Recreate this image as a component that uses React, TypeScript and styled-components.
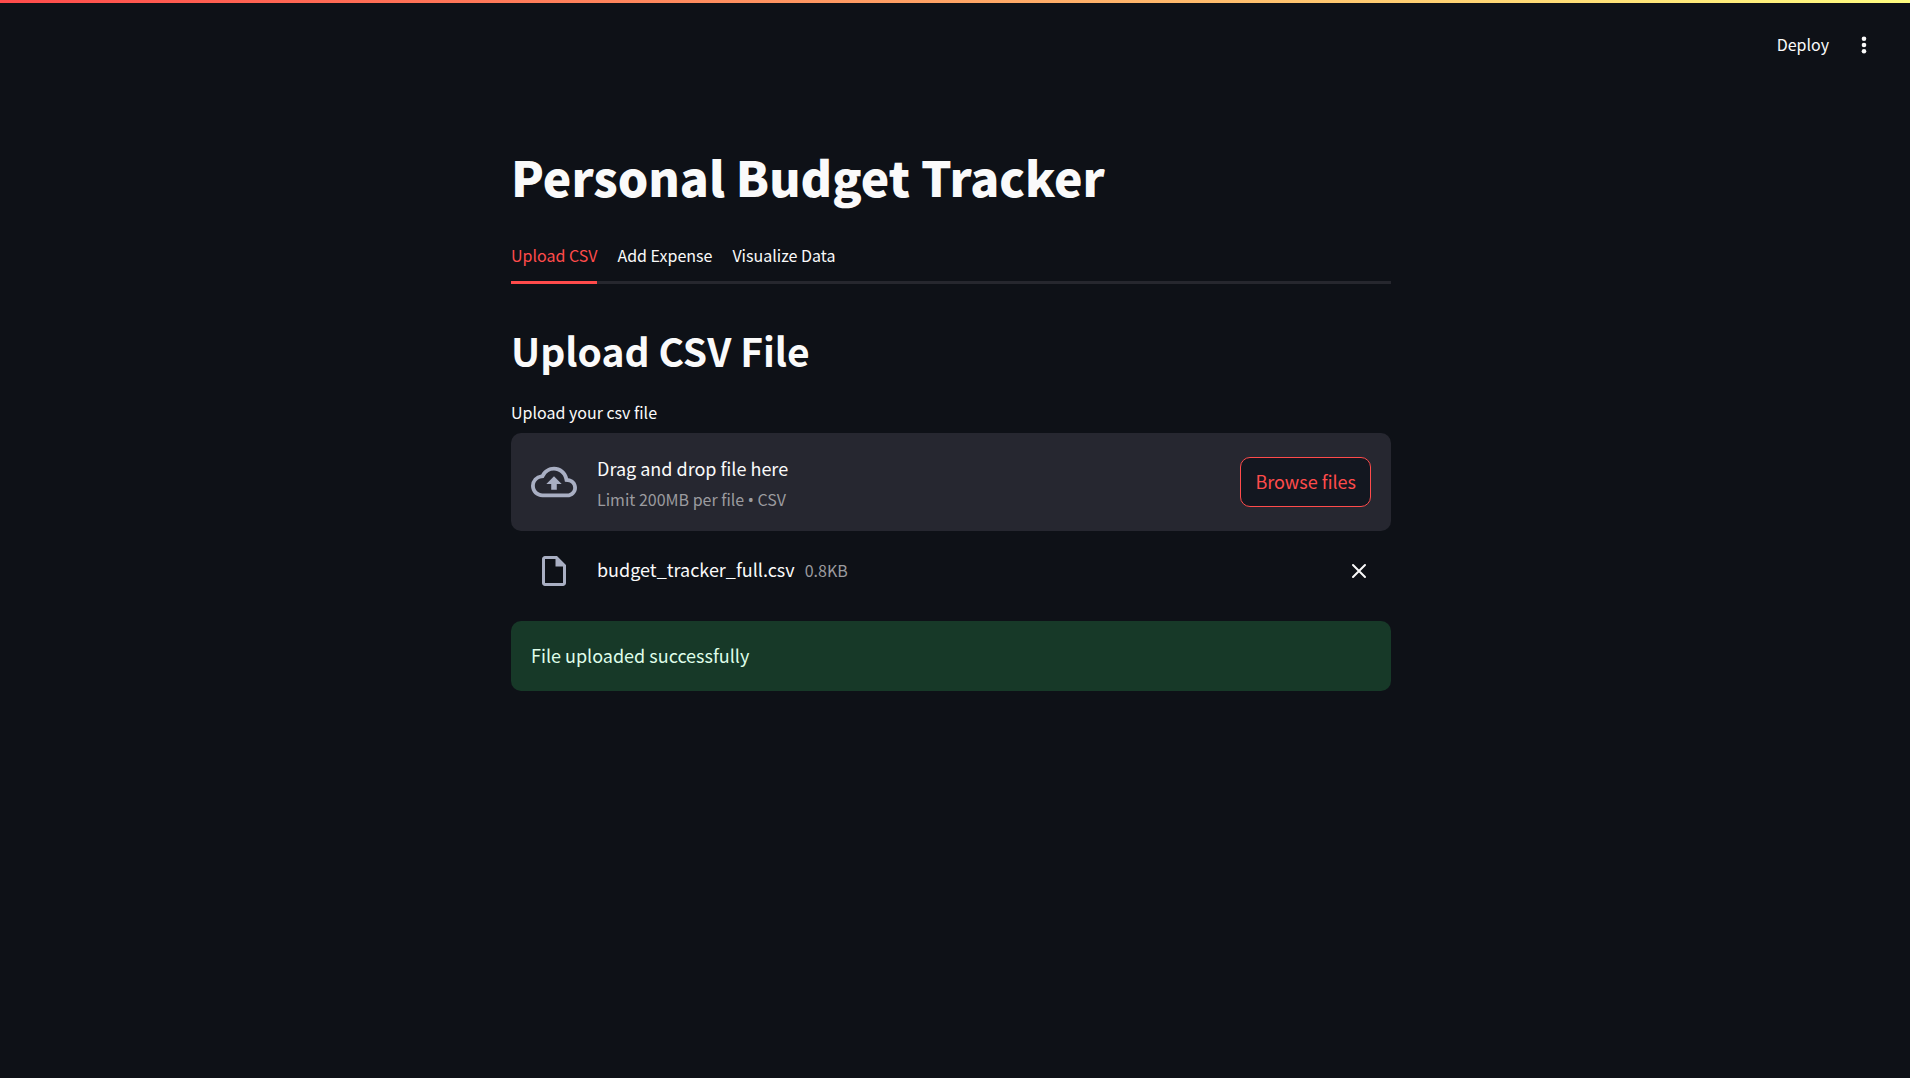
import React, { useState } from "react";
import styled, { createGlobalStyle } from "styled-components";

const GlobalStyle = createGlobalStyle`
  *, *::before, *::after { box-sizing: border-box; }
  body {
    margin: 0;
    background: #0e1117;
    color: #fafafa;
    font-family: "Noto Sans CJK SC", "Noto Sans", sans-serif;
    font-size: 18px;
    line-height: 32px;
  }
  button { font: inherit; color: inherit; cursor: pointer; }
  h1, h2, p { margin: 0; padding: 0; }
`;

const Page = styled.div`
  min-height: 100vh;
  display: flex;
  flex-direction: column;
`;

const Decoration = styled.div`
  height: 3px;
  background: linear-gradient(90deg, #ff4b4b, #fffd80);
`;

const Header = styled.header`
  display: flex;
  justify-content: flex-end;
  align-items: center;
  gap: 20px;
  height: 84px;
  padding: 0 31px;
`;

const HeaderButton = styled.button`
  display: flex;
  align-items: center;
  justify-content: center;
  min-width: 30px;
  height: 32px;
  padding: 0;
  border: 0;
  background: none;
  font-size: 16px;
  line-height: 30px;
`;

const DeployButton = styled(HeaderButton)`
  padding-bottom: 2px;
`;

const Main = styled.main`
  width: 100%;
  padding: 56px 8px 0 0;
`;

const Column = styled.div`
  max-width: 880px;
  margin: 0 auto;
`;

const Title = styled.h1`
  font-size: 48px;
  font-weight: 900;
  line-height: 66px;
`;

const TabList = styled.div`
  display: flex;
  gap: 20px;
  margin-top: 20px;
  box-shadow: inset 0 -3px #26272e;
`;

const Tab = styled.button<{ $active: boolean }>`
  height: 55px;
  padding: 0;
  border: 0;
  border-bottom: 3px solid ${(p) => (p.$active ? "#ff4b4b" : "transparent")};
  background: none;
  color: ${(p) => (p.$active ? "#ff4b4b" : "#fafafa")};
  font-size: 16px;
  line-height: 32px;
`;

const Heading = styled.h2`
  margin-top: 38px;
  font-size: 39px;
  font-weight: 700;
  line-height: 56px;
`;

const FieldLabel = styled.label`
  display: block;
  margin-top: 18px;
  font-size: 16px;
  line-height: 32px;
`;

const DropZone = styled.section`
  display: flex;
  align-items: center;
  gap: 20px;
  min-height: 98px;
  margin-top: 5px;
  padding: 0 20px;
  border-radius: 10px;
  background: #262730;
`;

const IconSlot = styled.span`
  display: flex;
  justify-content: center;
  width: 46px;
  color: #a9afc3;
`;

const DropText = styled.div`
  flex: 1;
  padding-top: 2px;
`;

const Muted = styled.p`
  color: #9b9b9f;
  font-size: 16px;
  line-height: 30px;
`;

const Bullet = styled.span`
  font-family: "Noto Sans", sans-serif;
`;

const BrowseButton = styled.button`
  height: 50px;
  padding: 0 14px 2px;
  border: 1px solid #ff4b4b;
  border-radius: 10px;
  background: #131720;
  color: #ff4b4b;
`;

const FileRow = styled.div`
  display: flex;
  align-items: center;
  gap: 20px;
  height: 80px;
  padding: 0 20px;
`;

const FileInfo = styled.div`
  flex: 1;
  display: flex;
  align-items: baseline;
  gap: 10px;
  padding-bottom: 4px;
`;

const RemoveButton = styled.button`
  display: flex;
  padding: 4px;
  border: 0;
  background: none;
`;

const Success = styled.div`
  margin-top: 10px;
  padding: 18px 20px 20px;
  border-radius: 10px;
  background: #173928;
  color: #dffde9;
`;

const TABS = ["Upload CSV", "Add Expense", "Visualize Data"];

export default function App() {
  const [active, setActive] = useState(TABS[0]);
  return (
    <Page>
      <GlobalStyle />
      <Decoration />
      <Header>
        <DeployButton>Deploy</DeployButton>
        <HeaderButton aria-label="Main menu">
          <svg width="20" height="20" viewBox="0 0 20 20" fill="currentColor">
            <circle cx="10" cy="3.7" r="2.3" />
            <circle cx="10" cy="10" r="2.3" />
            <circle cx="10" cy="16.3" r="2.3" />
          </svg>
        </HeaderButton>
      </Header>
      <Main>
        <Column>
          <Title>Personal Budget Tracker</Title>
          <TabList role="tablist">
            {TABS.map((name) => (
              <Tab
                key={name}
                role="tab"
                aria-selected={name === active}
                $active={name === active}
                onClick={() => setActive(name)}
              >
                {name}
              </Tab>
            ))}
          </TabList>
          <Heading>Upload CSV File</Heading>
          <FieldLabel htmlFor="csv">Upload your csv file</FieldLabel>
          <input id="csv" type="file" accept=".csv" hidden />
          <DropZone>
            <IconSlot>
              <svg width="46" height="46" viewBox="0 0 24 24" fill="currentColor">
                <path d="M19.35 10.04A7.49 7.49 0 0 0 12 4C9.11 4 6.6 5.64 5.35 8.04A5.994 5.994 0 0 0 0 14c0 3.31 2.69 6 6 6h13c2.76 0 5-2.24 5-5 0-2.64-2.05-4.78-4.65-4.96zM19 18H6c-2.21 0-4-1.79-4-4 0-2.05 1.53-3.76 3.56-3.97l1.07-.11.5-.95A5.469 5.469 0 0 1 12 6c2.62 0 4.88 1.86 5.39 4.43l.3 1.5 1.53.11A2.98 2.98 0 0 1 22 15c0 1.65-1.35 3-3 3zM8 13h2.55v3h2.9v-3H16l-4-4z" />
              </svg>
            </IconSlot>
            <DropText>
              <p>Drag and drop file here</p>
              <Muted>
                Limit 200MB per file <Bullet>•</Bullet> CSV
              </Muted>
            </DropText>
            <BrowseButton onClick={() => document.getElementById("csv")?.click()}>
              Browse files
            </BrowseButton>
          </DropZone>
          <FileRow>
            <IconSlot>
              <svg width="36" height="36" viewBox="0 0 24 24" fill="currentColor">
                <path d="M14 2H6c-1.1 0-1.99.9-1.99 2L4 20c0 1.1.89 2 1.99 2H18c1.1 0 2-.9 2-2V8l-6-6zM6 20V4h7v5h5v11H6z" />
              </svg>
            </IconSlot>
            <FileInfo>
              <p>budget_tracker_full.csv</p>
              <Muted>0.8KB</Muted>
            </FileInfo>
            <RemoveButton aria-label="Remove file">
              <svg width="16" height="16" viewBox="0 0 16 16" stroke="currentColor" strokeWidth="2" strokeLinecap="round">
                <path d="M2 2l12 12M14 2L2 14" />
              </svg>
            </RemoveButton>
          </FileRow>
          <Success role="alert">File uploaded successfully</Success>
        </Column>
      </Main>
    </Page>
  );
}
